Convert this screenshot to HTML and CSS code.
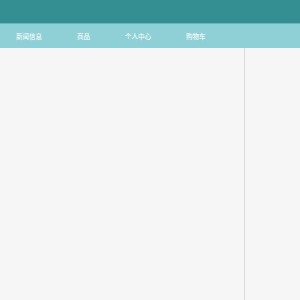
FILE: index.html
```html
<!DOCTYPE html>
<html lang="zh-CN">
<head>
    <meta charset="UTF-8">
    <meta name="viewport" content="width=device-width, initial-scale=1.0">
    <title>首页</title>
    <link rel="stylesheet" href="styles.css">
</head>
<body>
    <header class="topbar"></header>
    <nav class="nav">
        <a class="nav-item" href="#">新闻信息</a>
        <a class="nav-item" href="#">商品</a>
        <a class="nav-item" href="#">个人中心</a>
        <a class="nav-item" href="#">购物车</a>
    </nav>
    <div class="main">
        <div class="content"></div>
        <aside class="sidebar"></aside>
    </div>
</body>
</html>
```

FILE: styles.css
```css
:root {
    --dark-teal: #348f93;
    --light-teal: #8fd0d6;
    --bg-color: #f6f6f6;
    --line-color: #dcdcdc;
}

html, body {
    height: 100%;
}

body {
    margin: 0;
    font-family: "Noto Sans CJK SC", "Noto Sans", sans-serif;
    background-color: var(--bg-color);
    display: flex;
    flex-direction: column;
}

.topbar {
    height: 23px;
    background-color: var(--dark-teal);
    border-bottom: 1px solid #6db3b8;
}

.nav {
    height: 24px;
    background-color: var(--light-teal);
    display: flex;
    align-items: center;
    gap: 35px;
    padding-left: 16px;
}

.nav-item {
    color: #ffffff;
    font-size: 6.5px;
    text-decoration: none;
}

.main {
    flex: 1;
    display: flex;
}

.content {
    width: 244px;
    border-right: 1px solid var(--line-color);
}

.sidebar {
    flex: 1;
}
```
